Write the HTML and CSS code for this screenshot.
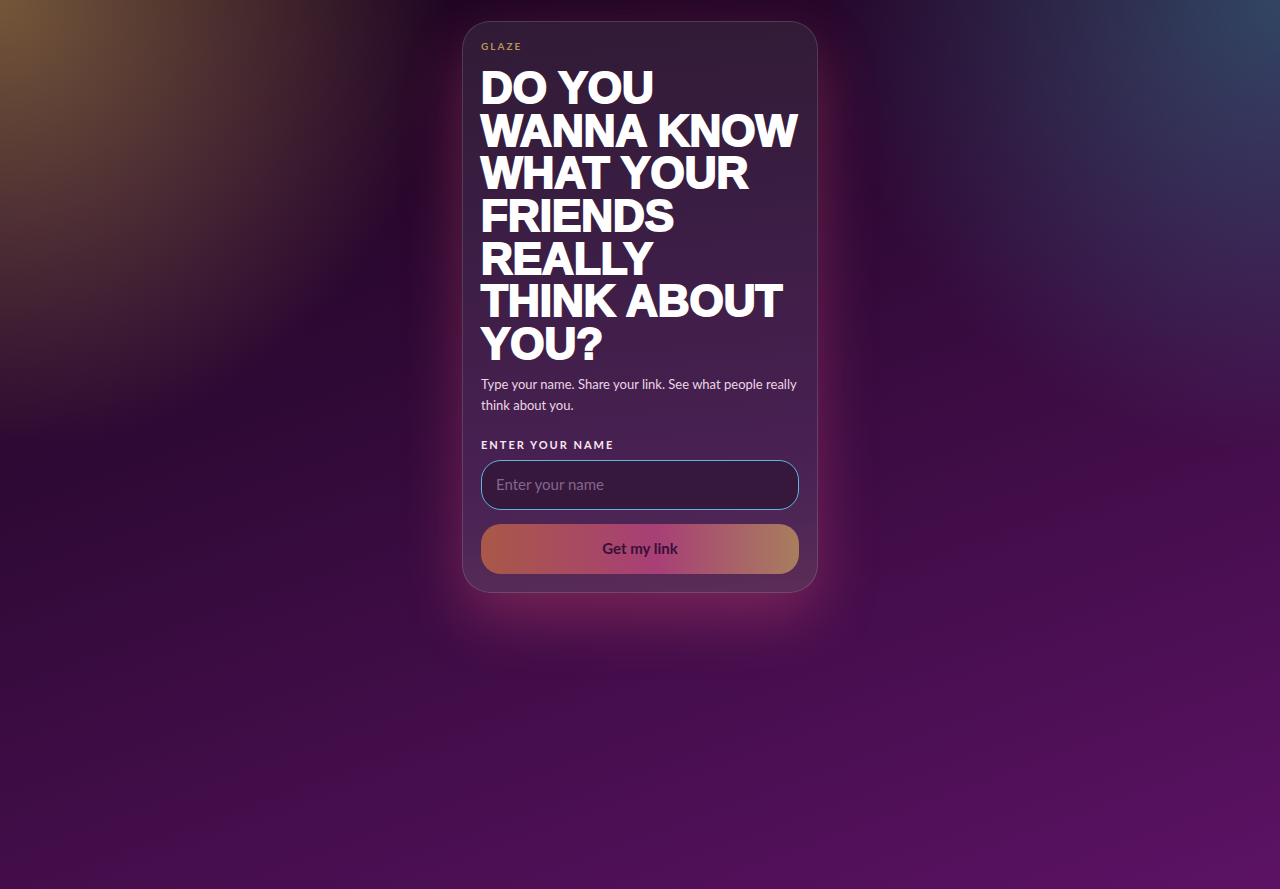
FILE: index.html
```html
<!DOCTYPE html>
<html lang="en">
<head>
  <meta charset="utf-8">
  <meta name="viewport" content="width=device-width, initial-scale=1">
  <title>Glaze</title>
  <link rel="stylesheet" href="styles.css">
</head>
<body>
  <main class="page">
    <section class="card">
      <p class="brand">GLAZE</p>
      <h1 class="title">Do you wanna know what your friends really<br>think about you?</h1>
      <p class="lead">Type your name. Share your link. See what people really think about you.</p>
      <form class="form">
        <div class="field">
          <label class="label" for="name">Enter your name</label>
          <input class="input" id="name" type="text" placeholder="Enter your name" autocomplete="off">
        </div>
        <button class="button" type="submit">Get my link</button>
      </form>
    </section>
  </main>
</body>
</html>
```

FILE: styles.css
```css
*,
*::before,
*::after {
  box-sizing: border-box;
}

body {
  margin: 0;
  min-height: 100vh;
  font-family: Lato, "Open Sans", sans-serif;
  color: #fff;
  background:
    radial-gradient(circle at top left, rgba(255, 212, 102, 0.4), transparent 29%),
    radial-gradient(circle at top right, rgba(60, 218, 216, 0.29), transparent 29%),
    linear-gradient(160deg, #18031b 0%, #320a39 42%, #5c1264 100%);
}

.page {
  display: flex;
  justify-content: center;
  align-items: flex-start;
  min-height: 100vh;
  padding: 21px 16px;
}

.card {
  width: 100%;
  max-width: 356px;
  padding: 18px;
  border: 1px solid rgba(255, 255, 255, 0.14);
  border-radius: 28px;
  background: linear-gradient(175deg, #301b35 0%, #3d1e46 42%, #492153 78%, #4f2756 88%, #5c2d56 100%) border-box;
  box-shadow: 0 24px 60px rgba(255, 90, 125, 0.3);
}

.brand {
  margin: 0 0 15px;
  font-size: 10px;
  font-weight: 700;
  line-height: 12px;
  letter-spacing: 2px;
  color: #b8935a;
}

.title {
  margin: 0 0 8px;
  font-family: "Liberation Sans", Arial, sans-serif;
  font-size: 44px;
  font-weight: 900;
  line-height: 0.97;
  text-transform: uppercase;
  -webkit-text-stroke: 2px #fff;
}

.lead {
  margin: 0 0 21px;
  font-size: 13px;
  line-height: 21px;
  color: #ecd5e6;
}

.form {
  display: grid;
  gap: 14px;
}

.field {
  display: grid;
  gap: 7px;
}

.label {
  font-size: 11px;
  font-weight: 700;
  line-height: 16px;
  letter-spacing: 2px;
  text-transform: uppercase;
  color: #fbe6f2;
}

.input {
  width: 100%;
  height: 50px;
  padding: 0 14px 2px;
  border: 1px solid #62b4d8;
  border-radius: 20px;
  outline: none;
  background: #35183c;
  font: inherit;
  font-size: 15px;
  color: #fff;
}

.input::placeholder {
  color: #86658c;
  opacity: 1;
}

.button {
  width: 100%;
  height: 50px;
  padding: 0 14px 2px;
  border: 0;
  border-radius: 20px;
  background: linear-gradient(90deg, #a95848 0%, #a83f76 55%, #a87e5e 100%);
  font: inherit;
  font-size: 15px;
  font-weight: 700;
  color: #36103a;
  cursor: pointer;
}
```
